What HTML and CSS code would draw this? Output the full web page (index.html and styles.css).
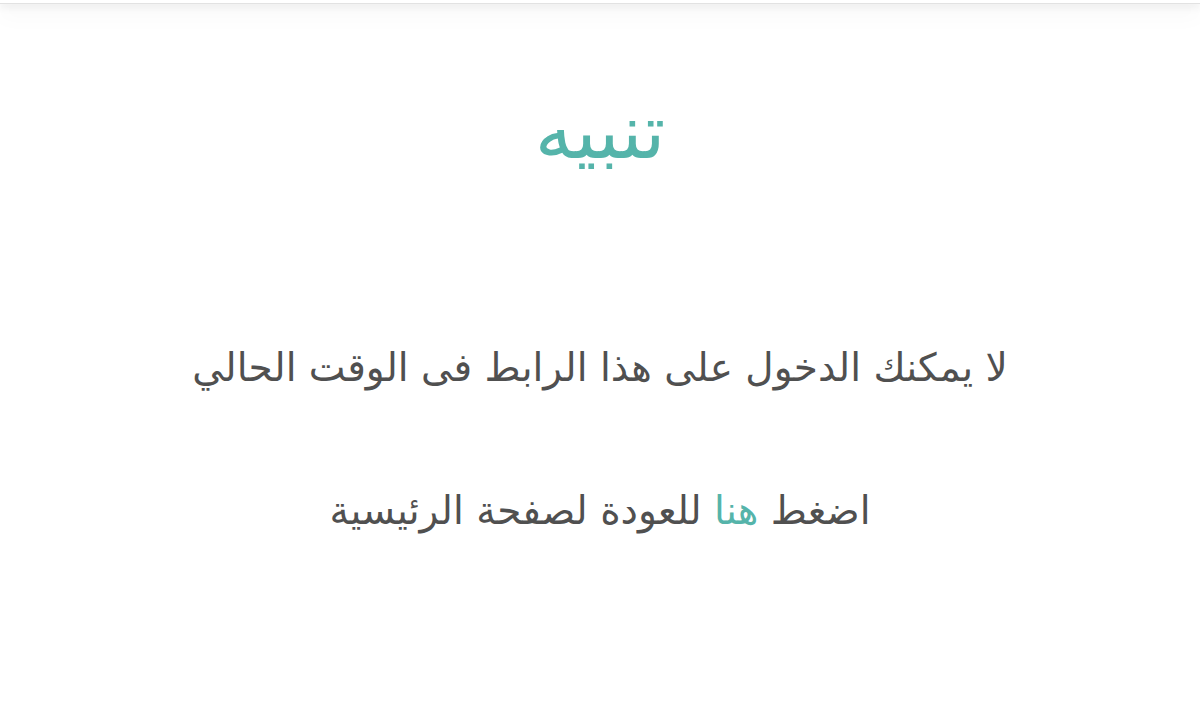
FILE: index.html
```html
<!DOCTYPE html>
<html lang="ar" dir="rtl">
<head>
<meta charset="utf-8">
<title>تنبيه</title>
<link rel="stylesheet" href="styles.css">
</head>
<body>
<header class="topbar"></header>
<main class="notice">
  <h1 class="notice-title">تنبيه</h1>
  <p class="notice-text">لا يمكنك الدخول على هذا الرابط فى الوقت الحالي</p>
  <p class="notice-text">اضغط <a class="notice-link" href="#">هنا</a> للعودة لصفحة الرئيسية</p>
</main>
</body>
</html>
```

FILE: styles.css
```css
html, body {
  margin: 0;
  padding: 0;
  background: #ffffff;
}
body {
  font-family: "DejaVu Sans", sans-serif;
  color: #505050;
  overflow: hidden;
}
.topbar {
  height: 3px;
  background: #ffffff;
  border-bottom: 1px solid #e2e2e2;
  box-shadow: 0 2px 8px rgba(0, 0, 0, 0.12), 0 8px 22px rgba(0, 0, 0, 0.1);
  position: relative;
  z-index: 1;
}
.notice {
  display: flex;
  flex-direction: column;
  align-items: center;
  text-align: center;
}
.notice-title {
  margin: 88px 0 0;
  font-size: 76px;
  line-height: 80px;
  font-weight: normal;
  color: #55b4aa;
}
.notice-text {
  margin: 0;
  font-size: 39px;
  line-height: 60px;
}
.notice-title + .notice-text {
  margin-top: 166px;
}
.notice-text + .notice-text {
  margin-top: 83px;
}
.notice-link {
  color: #55b4aa;
  text-decoration: none;
}
```
